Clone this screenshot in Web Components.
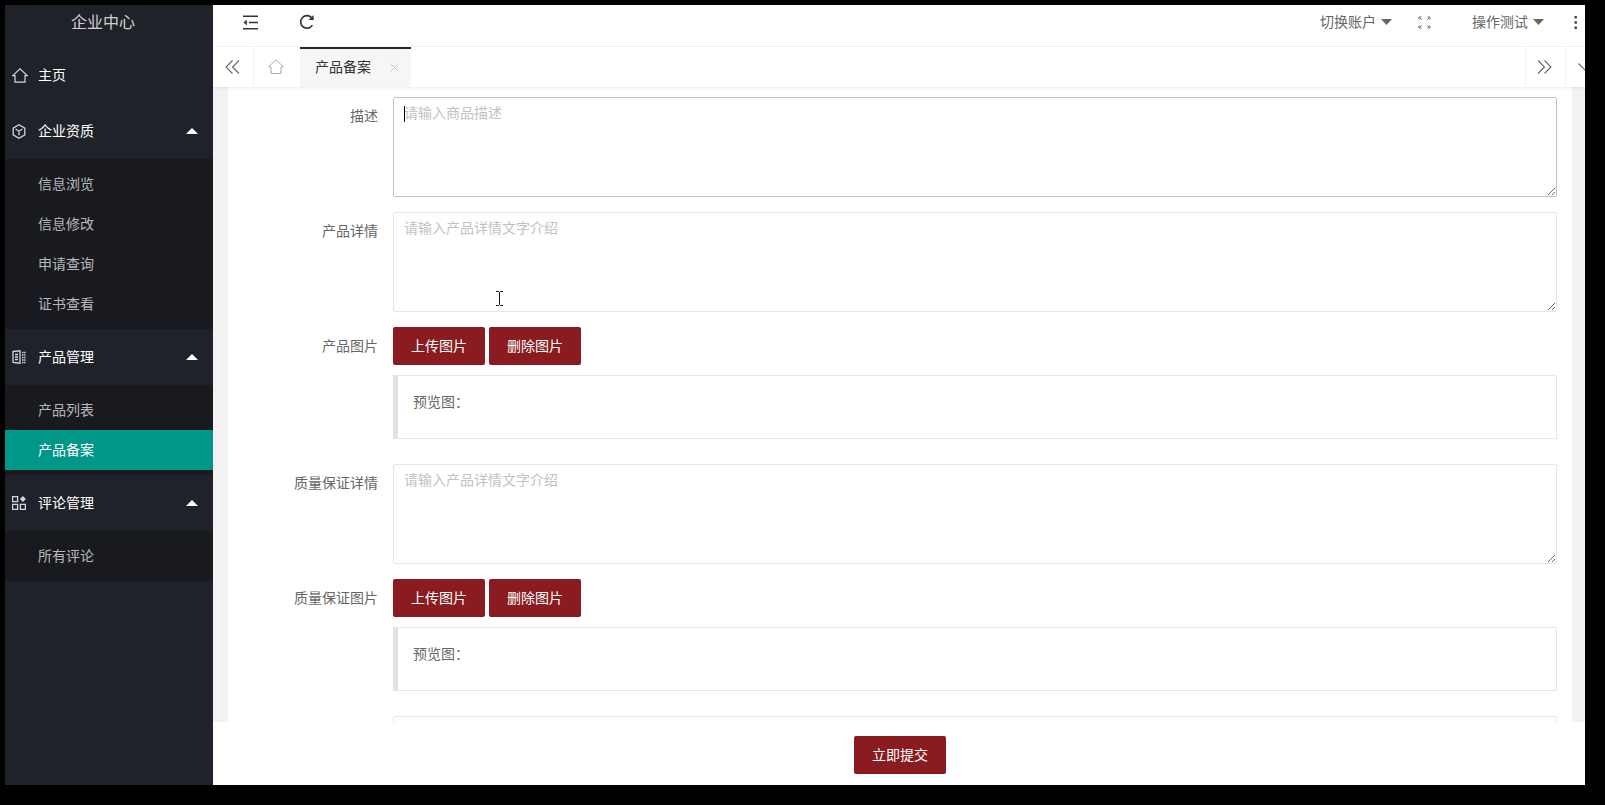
<!DOCTYPE html>
<html lang="zh-CN"><head><meta charset="utf-8"><title>产品备案</title>
<style>
html,body{margin:0;height:100%;overflow:hidden;background:#000}
body{box-sizing:border-box;padding:5px 20px 20px 5px;font:14px/20px "Noto Sans CJK SC","Liberation Sans",sans-serif;color:#666}
</style></head><body>
<admin-app></admin-app>
<script>
const def=(name,html,extra={})=>{customElements.define(name,class extends HTMLElement{
  constructor(){super();this.attachShadow({mode:'open'}).innerHTML=html}
  connectedCallback(){for(const a of (extra.attrs||[])){const n=this.shadowRoot.querySelector(`[data-${a}]`);if(n)n.textContent=this.getAttribute(a)||''}
    if(extra.ph){const p=this.getAttribute('placeholder');if(p)this.shadowRoot.querySelector('textarea').placeholder=p}}
})};
const base=`*{box-sizing:border-box}`;
const ic={
 shrink:`<svg width="15" height="15" viewBox="0 0 15 15" fill="none" stroke="#333" stroke-width="1.5"><path d="M0 1.200h15M6 7.500h9M0 13.800h15"/><path d="M3.600 5.200 .8 7.500l2.800 2.300z" fill="#333" stroke-width=".6"/></svg>`,
 refresh:`<svg width="16" height="16" viewBox="0 0 16 16" fill="none" stroke="#333" stroke-width="1.6"><path d="M13.400 11.200A6.300 6.300 0 1 1 12.600 3.600L14 5.200"/><path d="M14.600 1v5h-5z" fill="#333" stroke="none"/></svg>`,
 full:`<svg width="13" height="13" viewBox="0 0 13 13" fill="none" stroke="#777" stroke-width="1"><path d="M1 1l3 3M1 1h2.600M1 1v2.600M12 1 9 4M12 1H9.400M12 1v2.600M1 12l3-3M1 12h2.600M1 12V9.400M12 12 9 9M12 12H9.400M12 12V9.400"/></svg>`,
 caret:`<svg width="11" height="6" viewBox="0 0 11 6"><path d="M0 0h11L5.500 6z" fill="#666"/></svg>`,
 dots:`<svg width="4" height="13" viewBox="0 0 4 13"><path d="M.5 0h2.400v2.400H.5zM.5 5.300h2.400v2.400H.5zM.5 10.600h2.400V13H.5z" fill="#444"/></svg>`,
 dl:`<svg width="15" height="14" viewBox="0 0 15 14" fill="none" stroke="#666" stroke-width="1.100"><path d="M7.500.5 1 7l6.500 6.500M14 .5 7.500 7l6.500 6.500"/></svg>`,
 dr:`<svg width="15" height="14" viewBox="0 0 15 14" fill="none" stroke="#666" stroke-width="1.100"><path d="M1 .5 7.500 7 1 13.500M7.500.5 14 7l-6.500 6.500"/></svg>`,
 home:`<svg width="16" height="15" viewBox="0 0 16 15" fill="none" stroke="#aaa" stroke-width="1"><path d="M.6 7.800 8 .8l7.400 7H13v6.700H3V7.800z"/></svg>`,
 x:`<svg width="9" height="9" viewBox="0 0 9 9" stroke="#c8c8c8" stroke-width="1" fill="none"><path d="M.5.5l8 8M8.500.5l-8 8"/></svg>`,
 chev:`<svg width="16" height="9" viewBox="0 0 16 9" fill="none" stroke="#666" stroke-width="1.100"><path d="M.5.5 8 8 15.500.500"/></svg>`,
 shome:`<svg width="16" height="15" viewBox="0 0 16 15" fill="none" stroke="#d4d6da" stroke-width="1.200"><path d="M.8 7.600 8 .9l7.200 6.700H13v6.600H3V7.600z"/></svg>`,
 cube:`<svg width="14" height="15" viewBox="0 0 14 15" fill="none" stroke="#d4d6da" stroke-width="1.300"><path d="M7 .8l5.800 3.300v6.800L7 14.200 1.200 10.900V4.100zM3.600 5 7 7.200 10.400 5M7 7.200v4"/></svg>`,
 prod:`<svg width="14" height="14" viewBox="0 0 14 14" fill="none" stroke="#d4d6da" stroke-width="1.300"><path d="M1 1.500 8 .8v12.400l-7-.7zM3 4.500h3M3 7h3M3 9.500h3"/><path d="M10 2.500h3.500M10 5h3.500M10 7.500h3.500M10 10h3.500M10 12.500h3.500" stroke-dasharray="1.500 .6"/></svg>`,
 app:`<svg width="14" height="14" viewBox="0 0 14 14" fill="none" stroke="#d4d6da" stroke-width="1.300"><path d="M.6.600h5v5h-5zM.6 8.400h5v5h-5zM8.400 8.400h5v5h-5z"/><path d="M10.900 0l3 3-3 3-3-3z" fill="#d4d6da" stroke="none"/></svg>`
};

def('nav-sub',`<style>${base}:host{display:block;height:40px;line-height:38px;padding-left:33px;color:rgba(255,255,255,.7);font-size:14px}
:host([active]){background:#009688;color:#fff}</style><slot></slot>`);

def('nav-group',`<style>${base}:host{display:block}
.h{height:56px;display:flex;align-items:center;color:#fff;font-size:14px}
.i{width:33px;padding-left:7px;display:flex;align-items:center;flex:none}
::slotted([slot=icon]){display:flex}
.l{margin-top:-2px}
.c{margin-left:auto;margin-right:15px;display:block}
.s{background:#181a1f;padding:5px 0}
:host(:not([open])) .s,:host(:not([open])) .c{display:none}</style>
<div class="h"><span class="i"><slot name="icon"></slot></span><span class="l" data-label></span>
<svg class="c" width="12" height="6" viewBox="0 0 12 6"><path d="M6 0l6 6H0z" fill="#fff"/></svg></div>
<div class="s"><slot></slot></div>`,{attrs:['label']});

def('side-nav',`<style>${base}:host{display:block;width:208px;flex:none;background:#1f2229}
.logo{height:42px;line-height:32px;font-size:16px;text-align:center;padding-right:12px;color:rgba(255,255,255,.8)}</style>
<div class="logo">企业中心</div>
<nav-group label="主页"><span slot="icon">${ic.shome}</span></nav-group>
<nav-group label="企业资质" open><span slot="icon">${ic.cube}</span><nav-sub>信息浏览</nav-sub><nav-sub>信息修改</nav-sub><nav-sub>申请查询</nav-sub><nav-sub>证书查看</nav-sub></nav-group>
<nav-group label="产品管理" open><span slot="icon">${ic.prod}</span><nav-sub>产品列表</nav-sub><nav-sub active>产品备案</nav-sub></nav-group>
<nav-group label="评论管理" open><span slot="icon">${ic.app}</span><nav-sub>所有评论</nav-sub></nav-group>`);

def('top-bar',`<style>${base}:host{display:flex;align-items:center;height:42px;padding:0 7px 7px 30px;background:#fff;border-bottom:1px solid #f6f6f6;color:#666;font-size:14px}
.f{display:flex}.r{margin-left:41px}.a{margin-left:auto;display:flex;align-items:center}
.t{display:flex;align-items:center;gap:5px}.t span{margin-top:-2px}.t svg{margin-top:-1px}.fs{margin:0 41px 0 26px;display:flex}.d{margin-left:30px;display:flex}</style>
<span class="f">${ic.shrink}</span><span class="f r">${ic.refresh}</span>
<div class="a"><span class="t"><span>切换账户</span>${ic.caret}</span><span class="fs">${ic.full}</span><span class="t"><span>操作测试</span>${ic.caret}</span><span class="d">${ic.dots}</span></div>`);

def('tab-bar',`<style>${base}:host{display:flex;height:40px;background:#fff;box-shadow:0 1px 2px rgba(0,0,0,.08);position:relative;z-index:1;font-size:14px;overflow:hidden}
.b{width:41px;display:flex;align-items:center;justify-content:center;flex:none}
.l{width:41px;border-right:1px solid #f6f6f6;padding-right:2px}
.h{width:46px;padding:0 3px 2px 0}
.tab{width:111px;flex:none;background:#f6f6f6;border-top:2px solid #292929;display:flex;align-items:center;padding:0 0 2px 15px;color:#333;line-height:20px}
.tab span:first-child{margin-top:-2px}
.x{margin-left:19px;display:flex}
.rr{margin-left:auto;width:40px;border-left:1px solid #f6f6f6;padding-right:2px}
.e{width:20px;border-left:1px solid #f6f6f6;overflow:hidden;justify-content:flex-start;padding-left:12px}.e svg{flex:none}</style>
<div class="b l">${ic.dl}</div><div class="b h">${ic.home}</div>
<div class="tab"><span>产品备案</span><span class="x">${ic.x}</span></div>
<div class="b rr">${ic.dr}</div><div class="b e">${ic.chev}</div>`);

def('form-row',`<style>${base}:host{display:grid;grid-template-columns:150px 1fr;column-gap:15px;margin-bottom:15px}
.lb{padding-top:8px;text-align:right;line-height:20px;color:#666}
.ct{min-width:0}</style><div class="lb" data-label></div><div class="ct"><slot></slot></div>`,{attrs:['label']});

def('text-box',`<style>${base}:host{display:block;height:100px;position:relative}
textarea{display:block;width:100%;height:100px;padding:4px 10px;border:1px solid #e6e6e6;border-radius:2px;background:#fff;outline:0;font:14px/20px "Noto Sans CJK SC","Liberation Sans",sans-serif;color:#666;resize:vertical}
textarea::placeholder{color:#c2c2c2;opacity:1}
:host([focused]) textarea{border-color:#c2c2c2}
.cur{position:absolute;left:11px;top:9px;width:1px;height:16px;background:#000;display:none}
:host([focused]) .cur{display:block}</style><textarea></textarea><span class="cur"></span>`,{ph:true});

def('red-btn',`<style>${base}:host{display:inline-block;width:92px;height:38px;line-height:36px;text-align:center;background:#8a1b20;color:#fff;border-radius:2px;font-size:14px}</style><slot></slot>`);

def('preview-note',`<style>${base}:host{display:block;height:64px;padding:14px 15px;line-height:22px;border:1px solid #e6e6e6;border-left:5px solid #e2e2e2;background:#fff;color:#666;margin-top:10px;margin-bottom:10px}</style>预览图：`);

def('upload-field',`<style>${base}:host{display:block}.b{display:flex;gap:4px}</style>
<div class="b"><red-btn>上传图片</red-btn><red-btn>删除图片</red-btn></div><preview-note></preview-note>`);

def('product-form',`<style>${base}:host{display:block;background:#fff;padding:10px 15px 0 0;overflow:hidden;height:100%}</style>
<form-row label="描述"><text-box focused placeholder="请输入商品描述"></text-box></form-row>
<form-row label="产品详情"><text-box placeholder="请输入产品详情文字介绍"></text-box></form-row>
<form-row label="产品图片"><upload-field></upload-field></form-row>
<form-row label="质量保证详情"><text-box placeholder="请输入产品详情文字介绍"></text-box></form-row>
<form-row label="质量保证图片"><upload-field></upload-field></form-row>
<form-row label=""><text-box></text-box></form-row>`);

def('admin-app',`<style>${base}:host{display:flex;width:1580px;height:780px;background:#fff}
.m{flex:1;min-width:0;display:flex;flex-direction:column}
.body{flex:1;min-height:0;background:#f2f2f2;padding:0 13px 0 15px;position:relative;overflow:hidden}
.foot{height:63px;flex:none;background:#fff;display:flex;align-items:center;justify-content:center;padding-left:2px;padding-top:3px;position:relative}
.beam{position:absolute;left:283px;top:204px}</style>
<side-nav></side-nav>
<div class="m"><top-bar></top-bar><tab-bar></tab-bar>
<div class="body"><product-form></product-form>
<svg class="beam" width="7" height="15" viewBox="0 0 7 15" fill="none" stroke="#111" stroke-width="1"><path d="M0 .5h2.500L3.500 1.500l1-1H7M3.500 1.500v12M0 14.500h2.500l1-1 1 1H7"/></svg></div>
<div class="foot"><red-btn>立即提交</red-btn></div></div>`);
</script>
</body></html>
